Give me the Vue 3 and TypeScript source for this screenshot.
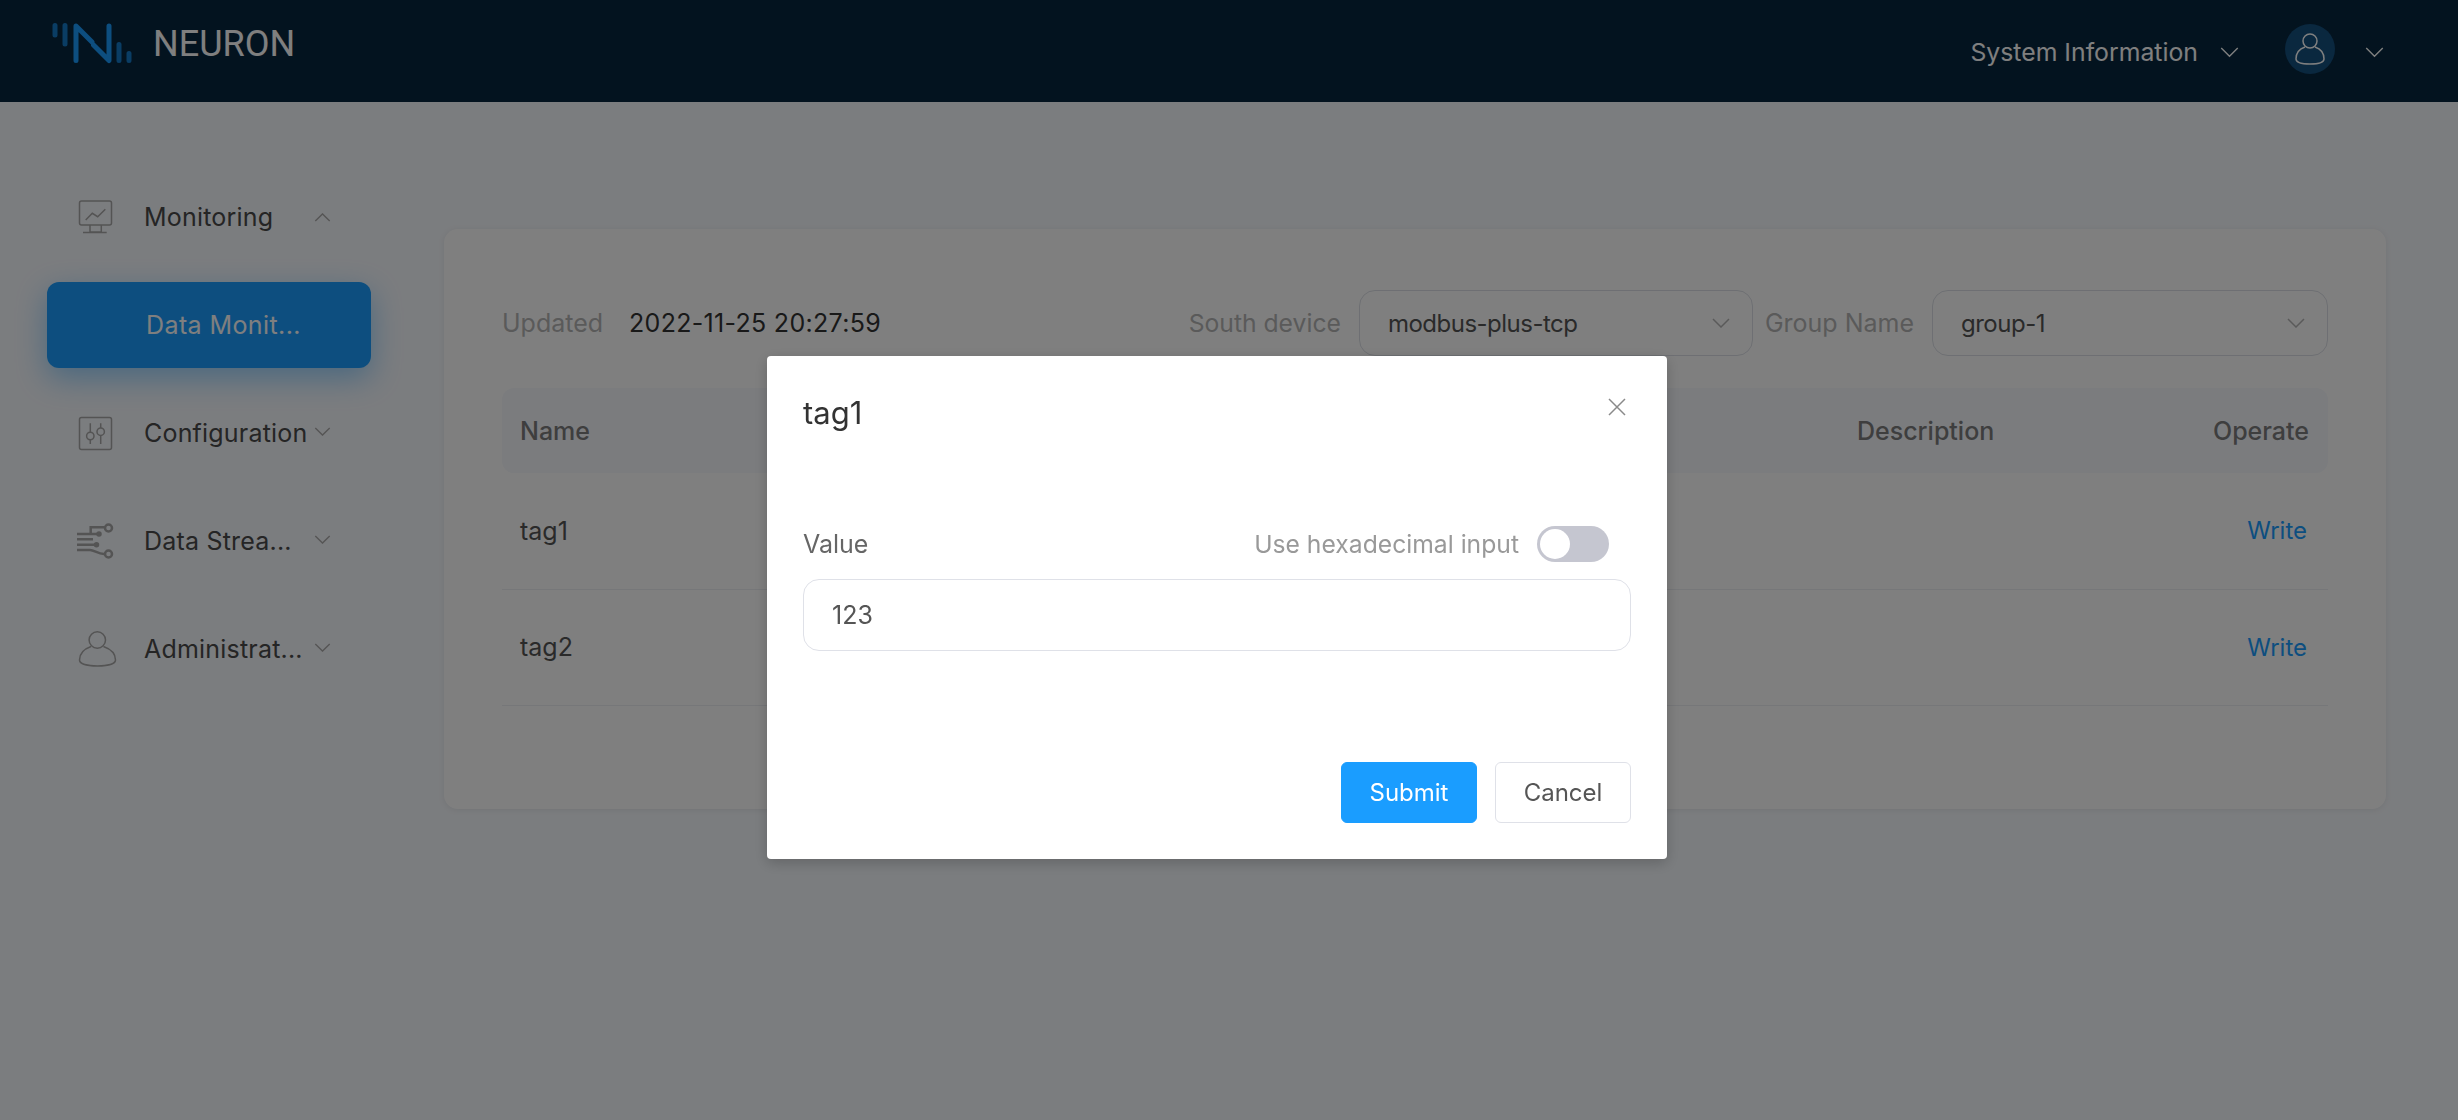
<template>
  <div class="page">
    <header class="top-bar">
      <div class="brand">
        <svg class="logo" width="82" height="42" viewBox="0 0 82 42" fill="none" stroke="#1a9dff" stroke-width="5" stroke-linecap="round" stroke-linejoin="round">
          <path d="M24 38.500V4l16 16M41.500 23L57 38.500V4" />
          <path class="logo-dim" d="M3 3.500V13M13 3.500V22M67 22.500v16M77 31.500v7" />
        </svg>
        <span class="brand-name">NEURON</span>
      </div>
      <div class="top-actions">
        <span class="top-link">System Information</span>
        <svg class="chevron top-chevron" viewBox="0 0 20 12"><path d="M1 1l9 9 9-9" /></svg>
        <span class="avatar">
          <svg width="32" height="34" viewBox="0 0 32 34" fill="none" stroke="#fff" stroke-width="1.500">
            <circle cx="16" cy="9" r="7" />
            <path d="M11 15C5 17 2 22 2 27c0 3 5 5 14 5s14-2 14-5c0-5-3-10-9-12" />
          </svg>
        </span>
        <svg class="chevron top-chevron" viewBox="0 0 20 12"><path d="M1 1l9 9 9-9" /></svg>
      </div>
    </header>

    <div class="body">
      <nav class="side-nav">
        <template v-for="item in navItems" :key="item.label">
          <div class="nav-item">
            <svg class="nav-icon" width="38" height="36" viewBox="0 0 38 36" fill="none" stroke="#a8a8a8" stroke-width="1.500" v-html="item.icon"></svg>
            <span class="nav-label">{{ item.label }}</span>
            <svg class="chevron nav-chevron" :class="{ open: item.open }" viewBox="0 0 18 10"><path d="M1 1l8 8 8-8" /></svg>
          </div>
          <div v-if="item.open" class="nav-item sub active">
            <span class="nav-label">Data Monit...</span>
          </div>
        </template>
      </nav>

      <main class="main">
        <section class="card">
          <div class="filters">
            <span class="muted">Updated</span>
            <span class="updated-time">2022-11-25 20:27:59</span>
            <span class="filter-label south">South device</span>
            <div class="select south-select">
              <span>modbus-plus-tcp</span>
              <svg class="chevron select-chevron" viewBox="0 0 18 10"><path d="M1 1l8 8 8-8" /></svg>
            </div>
            <span class="filter-label group">Group Name</span>
            <div class="select group-select">
              <span>group-1</span>
              <svg class="chevron select-chevron" viewBox="0 0 18 10"><path d="M1 1l8 8 8-8" /></svg>
            </div>
          </div>

          <div class="table">
            <div class="row head">
              <span>Name</span>
              <span>Description</span>
              <span class="right">Operate</span>
            </div>
            <div v-for="tag in tags" :key="tag" class="row">
              <span class="tag-name">{{ tag }}</span>
              <span></span>
              <a class="right write-link">Write</a>
            </div>
          </div>
        </section>
      </main>
    </div>

    <div class="mask">
      <div class="dialog">
        <div class="dialog-head">
          <h2>tag1</h2>
          <svg class="close" width="20" height="20" viewBox="0 0 20 20"><path d="M2 2l16 16M18 2L2 18" /></svg>
        </div>
        <div class="field-head">
          <label>Value</label>
          <div class="hex-toggle">
            <span>Use hexadecimal input</span>
            <span class="switch"><i></i></span>
          </div>
        </div>
        <input class="value-input" type="text" value="123" />
        <div class="dialog-foot">
          <button class="btn primary">Submit</button>
          <button class="btn">Cancel</button>
        </div>
      </div>
    </div>
  </div>
</template>

<script setup lang="ts">
const tags = ['tag1', 'tag2']

const navItems = [
  {
    label: 'Monitoring',
    open: true,
    icon: '<rect x="3.500" y="2" width="32" height="24" rx="2"/><path d="M9.700 21l6.600-6.700 5.400 3.400 7.600-7.400M14 26v7h11.300v-7M7 33.500h23.700"/>',
  },
  {
    label: 'Configuration',
    open: false,
    icon: '<rect x="3.500" y="2.500" width="32" height="32" rx="2"/><circle cx="14.300" cy="21" r="3.700"/><circle cx="24.700" cy="16.700" r="3.700"/><path d="M14.300 8.300v9M14.300 24.700V29M24.700 8.300V13M24.700 20.400V29"/>',
  },
  {
    label: 'Data Strea...',
    open: false,
    icon: '<g stroke-width="2.500"><path d="M14.700 11V4.300H29M1 11h23M1 16.300h16M1 21.700h20M1 27h13c4 0 8 4 14 4"/><circle cx="32.500" cy="5" r="3.500"/><circle cx="32.500" cy="31" r="3.500"/></g><circle cx="23" cy="11" r="2" fill="#a8a8a8"/><circle cx="20.500" cy="21.700" r="2" fill="#a8a8a8"/>',
  },
  {
    label: 'Administrat...',
    open: false,
    icon: '<circle cx="21.300" cy="9" r="8.200"/><path d="M15 15.500C8 18 3.500 23 3.500 29c0 4 8 6 18 6s18-2 18-6c0-6-5-11-12-13.500"/>',
  },
]
</script>

<style scoped>
.page {
  position: relative;
  min-height: 1120px;
  background: #f7fafe;
  font-family: Inter, "Liberation Sans", sans-serif;
  font-size: 25px;
  color: #333;
}
.top-bar {
  height: 102px;
  box-sizing: border-box;
  display: flex;
  justify-content: space-between;
  background: #07263e;
  padding: 0 74px 0 52px;
}
.brand {
  display: flex;
  align-items: flex-start;
  padding-top: 22px;
  gap: 19px;
}
.logo-dim {
  opacity: 0.72;
}
.brand-name {
  margin-top: 1px;
  font-family: Roboto, sans-serif;
  font-size: 36px;
  line-height: 42px;
  color: #fff;
}
.top-actions {
  display: flex;
  align-items: center;
  padding-bottom: 2px;
  color: #fff;
}
.top-link {
  margin-top: 4px;
  font-size: 24.800px;
}
.chevron {
  fill: none;
  stroke: currentColor;
  stroke-width: 1.500;
}
.top-chevron {
  width: 19px;
  height: 11px;
  margin: 4px 0 0 22px;
}
.avatar {
  width: 50px;
  height: 50px;
  margin: -2px 8px 0 46px;
  border-radius: 50%;
  background: #14507f;
  display: flex;
  align-items: center;
  justify-content: center;
}
.body {
  display: flex;
}
.side-nav {
  width: 444px;
  flex-shrink: 0;
  box-sizing: border-box;
  padding: 72px 73px 0 47px;
  display: flex;
  flex-direction: column;
  gap: 22px;
}
.nav-item {
  height: 86px;
  display: flex;
  align-items: center;
  padding-left: 29px;
  border-radius: 12px;
}
.nav-icon {
  flex-shrink: 0;
  margin-right: 30px;
  overflow: visible;
}
.nav-label {
  width: 161px;
  white-space: nowrap;
  color: #4a4a4a;
  letter-spacing: 0.2px;
}
.nav-chevron {
  width: 17px;
  height: 9px;
  margin: -3px 0 0 9px;
  color: #aaa;
}
.nav-chevron.open {
  margin-top: 0;
  transform: rotate(180deg);
}
.nav-item.active {
  background: #1a9dff;
  padding-left: 99px;
  box-shadow: 0 10px 30px rgba(26, 157, 255, 0.45);
}
.nav-item.active .nav-label {
  width: 157px;
  color: #fff;
  letter-spacing: 0.4px;
}
.main {
  flex: 1;
  padding: 127px 72px 0 0;
}
.card {
  height: 580px;
  box-sizing: border-box;
  padding: 61px 58px 0;
  background: #fff;
  border-radius: 14px;
  box-shadow: 0 1px 6px rgba(0, 0, 0, 0.08);
}
.filters {
  height: 66px;
  display: flex;
  align-items: center;
}
.muted,
.filter-label {
  color: #b5b5b5;
  white-space: nowrap;
}
.filter-label.south {
  margin-left: auto;
  font-size: 24.700px;
}
.updated-time {
  margin-left: 26px;
  color: #333;
  letter-spacing: 0.3px;
}
.select {
  height: 66px;
  box-sizing: border-box;
  display: flex;
  align-items: center;
  justify-content: space-between;
  padding: 0 22px 0 28px;
  border: 1px solid #dcdfe6;
  border-radius: 16px;
  color: #555;
  font-size: 24px;
  letter-spacing: -0.5px;
}
.south-select {
  width: 394px;
  margin: 0 12px 0 18px;
}
.group-select {
  width: 396px;
  margin-left: 18px;
}
.select-chevron {
  width: 18px;
  height: 10px;
  color: #b5b5b5;
}
.table {
  margin-top: 32px;
}
.row {
  height: 116.500px;
  display: grid;
  grid-template-columns: 1337px 1fr auto;
  align-items: center;
  padding: 0 21px 0 18px;
  border-bottom: 1px solid #eceef2;
  box-sizing: border-box;
}
.row.head {
  height: 85px;
  padding-right: 19px;
  background: #f6f8fc;
  border: 0;
  border-radius: 12px;
  color: #7c7c7c;
  font-weight: 500;
}
.tag-name {
  color: #555;
}
.right {
  text-align: right;
}
.write-link {
  color: #1a9dff;
  font-size: 24px;
}
.mask {
  position: fixed;
  inset: 0;
  box-sizing: border-box;
  padding: 356px 24px 0 0;
  background: rgba(0, 0, 0, 0.5);
  display: flex;
  justify-content: center;
  align-items: flex-start;
}
.dialog {
  width: 900px;
  height: 503px;
  box-sizing: border-box;
  padding: 0 36px;
  background: #fff;
  border-radius: 4px;
  box-shadow: 0 4px 14px rgba(0, 0, 0, 0.2);
}
.dialog-head {
  height: 112px;
  display: flex;
  justify-content: space-between;
  align-items: center;
}
.dialog-head h2 {
  margin: 0;
  font-size: 31px;
  font-weight: 400;
  color: #333;
}
.close {
  margin: -10px 4px 0 0;
  fill: none;
  stroke: #8a8a8a;
  stroke-width: 1.500;
}
.field-head {
  margin-top: 56px;
  height: 40px;
  display: flex;
  justify-content: space-between;
  align-items: center;
  color: #666;
}
.hex-toggle {
  display: flex;
  align-items: center;
  gap: 18px;
  margin-right: 22px;
  color: #999;
  font-size: 24.700px;
}
.switch {
  width: 72px;
  height: 36px;
  padding: 3px;
  box-sizing: border-box;
  border-radius: 18px;
  background: #c5c6d0;
  display: flex;
}
.switch i {
  width: 30px;
  height: 30px;
  border-radius: 50%;
  background: #fff;
}
.value-input {
  display: block;
  width: 100%;
  height: 72px;
  margin-top: 15px;
  box-sizing: border-box;
  padding: 0 28px;
  border: 1px solid #dfe1e8;
  border-radius: 16px;
  outline: none;
  font: inherit;
  color: #555;
}
.dialog-foot {
  margin-top: 111px;
  display: flex;
  justify-content: flex-end;
  gap: 18px;
}
.btn {
  width: 136px;
  height: 61px;
  border: 1px solid #dfe1e8;
  border-radius: 6px;
  background: #fff;
  font: inherit;
  font-size: 24px;
  color: #555;
  padding: 0;
}
.btn.primary {
  background: #1a9dff;
  border-color: #1a9dff;
  color: #fff;
}
</style>

<style>
html,
body {
  background: #f7fafe;
}
</style>
